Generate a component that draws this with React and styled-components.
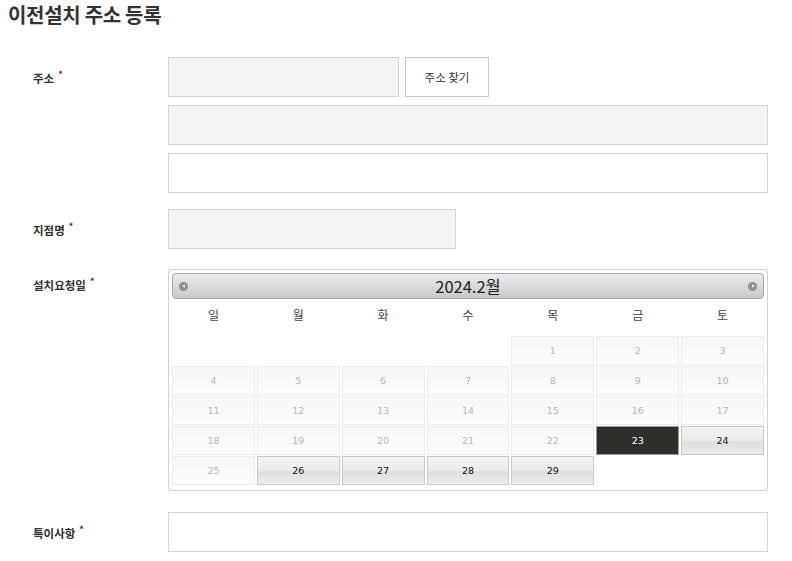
import React from 'react';
import styled, { createGlobalStyle } from 'styled-components';

const Global = createGlobalStyle`
  body {
    margin: 0;
    background: #fff;
    font-family: "Noto Sans CJK KR", "Noto Sans", sans-serif;
    color: #333;
  }
`;

const Page = styled.div`
  width: 792px;
  padding: 2px 0 0 8px;
  box-sizing: border-box;
`;

const Title = styled.h2`
  margin: 0;
  font-size: 20px;
  line-height: 26px;
  font-weight: 700;
  color: #333;
  letter-spacing: -0.3px;
`;

const Form = styled.div`
  display: flex;
  flex-direction: column;
  margin-top: 29px;
`;

const Row = styled.div`
  display: grid;
  grid-template-columns: 135px 600px;
  padding-left: 25px;
  margin-bottom: ${p => p.$mb || 0}px;
`;

const Label = styled.div`
  font-size: 11.5px;
  font-weight: 700;
  color: #333;
  padding-top: ${p => p.$top || 13}px;
  line-height: 16px;
`;

const Req = styled.span`
  color: #8b0d16;
  font-size: 9px;
  vertical-align: top;
  position: relative;
  top: -3px;
  margin-left: 4px;
`;

const Stack = styled.div`
  display: flex;
  flex-direction: column;
  gap: 8px;
`;

const Line = styled.div`
  display: flex;
  gap: 6px;
`;

const Input = styled.input`
  box-sizing: border-box;
  height: 40px;
  width: ${p => p.$w || 600}px;
  border: 1px solid #d4d4d4;
  background: ${p => (p.$gray ? '#f4f4f4' : '#fff')};
  outline: none;
  margin: 0;
  padding: 0 10px;
`;

const Button = styled.button`
  box-sizing: border-box;
  height: 40px;
  width: 84px;
  border: 1px solid #c8c8c8;
  background: #fff;
  font-family: inherit;
  font-size: 11.5px;
  color: #333;
  padding: 0;
  cursor: pointer;
`;

const Calendar = styled.div`
  box-sizing: border-box;
  width: 600px;
  border: 1px solid #d0d0d0;
  border-radius: 3px;
  padding: 3px 3px 5px;
`;

const CalHead = styled.div`
  height: 26px;
  box-sizing: border-box;
  border: 1px solid #a9a9a9;
  border-radius: 4px;
  background: linear-gradient(#ececec, #c9c9c9);
  display: flex;
  align-items: center;
  justify-content: space-between;
  padding: 0 6px;
`;

const CalTitle = styled.span`
  font-family: "Noto Sans CJK KR", "Noto Sans", sans-serif;
  font-size: 16.5px;
  color: #222;
  line-height: 20px;
`;

const Arrow = styled.span`
  width: 9px;
  height: 9px;
  border-radius: 50%;
  background: #8f8f8f;
  position: relative;
  &::after {
    content: '';
    position: absolute;
    top: 2.5px;
    ${p => (p.$right ? 'left: 3.5px;' : 'left: 2.5px;')}
    border-top: 2px solid transparent;
    border-bottom: 2px solid transparent;
    ${p => (p.$right ? 'border-left: 3px solid #ddd;' : 'border-right: 3px solid #ddd;')}
  }
`;

const Week = styled.div`
  display: grid;
  grid-template-columns: repeat(7, 1fr);
  gap: 2px;
  height: 37px;
  box-sizing: border-box;
  padding-bottom: 7px;
  align-items: center;
  text-align: center;
  font-size: 12px;
  color: #444;
`;

const Grid = styled.div`
  display: grid;
  grid-template-columns: repeat(7, 1fr);
  grid-auto-rows: 29px;
  gap: 1px 2px;
`;

const Day = styled.div`
  box-sizing: border-box;
  display: flex;
  align-items: center;
  justify-content: center;
  font-family: "DejaVu Sans", Verdana, sans-serif;
  font-size: 9.5px;
  ${p =>
    p.$kind === 'off'
      ? `border: 1px solid #ececec; background: linear-gradient(#f7f7f7, #fcfcfc); color: #b8b8b8;`
      : p.$kind === 'sel'
      ? `border: 1px solid #9a9a9a; background: #302e2b; color: #fff;`
      : p.$kind === 'on'
      ? `border: 1px solid #c9c9c9; background: linear-gradient(#f3f3f3 0%, #ebebeb 50%, #dedede 55%, #ececec 100%); color: #111;`
      : `border: none; background: transparent;`}
`;

const weeks = ['일', '월', '화', '수', '목', '금', '토'];

const days = [
  ...Array(4).fill(null).map(() => ({ kind: 'empty' })),
  ...Array.from({ length: 29 }, (_, i) => {
    const d = i + 1;
    let kind = 'off';
    if (d === 23) kind = 'sel';
    else if (d === 24 || d >= 26) kind = 'on';
    return { d, kind };
  }),
];

export default function App() {
  return (
    <Page>
      <Global />
      <Title>이전설치 주소 등록</Title>
      <Form>
        <Row $mb={16}>
          <Label>주소<Req>*</Req></Label>
          <Stack>
            <Line>
              <Input $gray $w={231} />
              <Button>주소 찾기</Button>
            </Line>
            <Input $gray />
            <Input />
          </Stack>
        </Row>
        <Row $mb={20}>
          <Label>지점명<Req>*</Req></Label>
          <Input $gray $w={288} />
        </Row>
        <Row $mb={21}>
          <Label $top={8}>설치요청일<Req>*</Req></Label>
          <Calendar>
            <CalHead>
              <Arrow />
              <CalTitle>2024.2월</CalTitle>
              <Arrow $right />
            </CalHead>
            <Week>
              {weeks.map(w => <span key={w}>{w}</span>)}
            </Week>
            <Grid>
              {days.map((x, i) => (
                <Day key={i} $kind={x.kind}>{x.d}</Day>
              ))}
            </Grid>
          </Calendar>
        </Row>
        <Row>
          <Label>특이사항<Req>*</Req></Label>
          <Input />
        </Row>
      </Form>
    </Page>
  );
}
